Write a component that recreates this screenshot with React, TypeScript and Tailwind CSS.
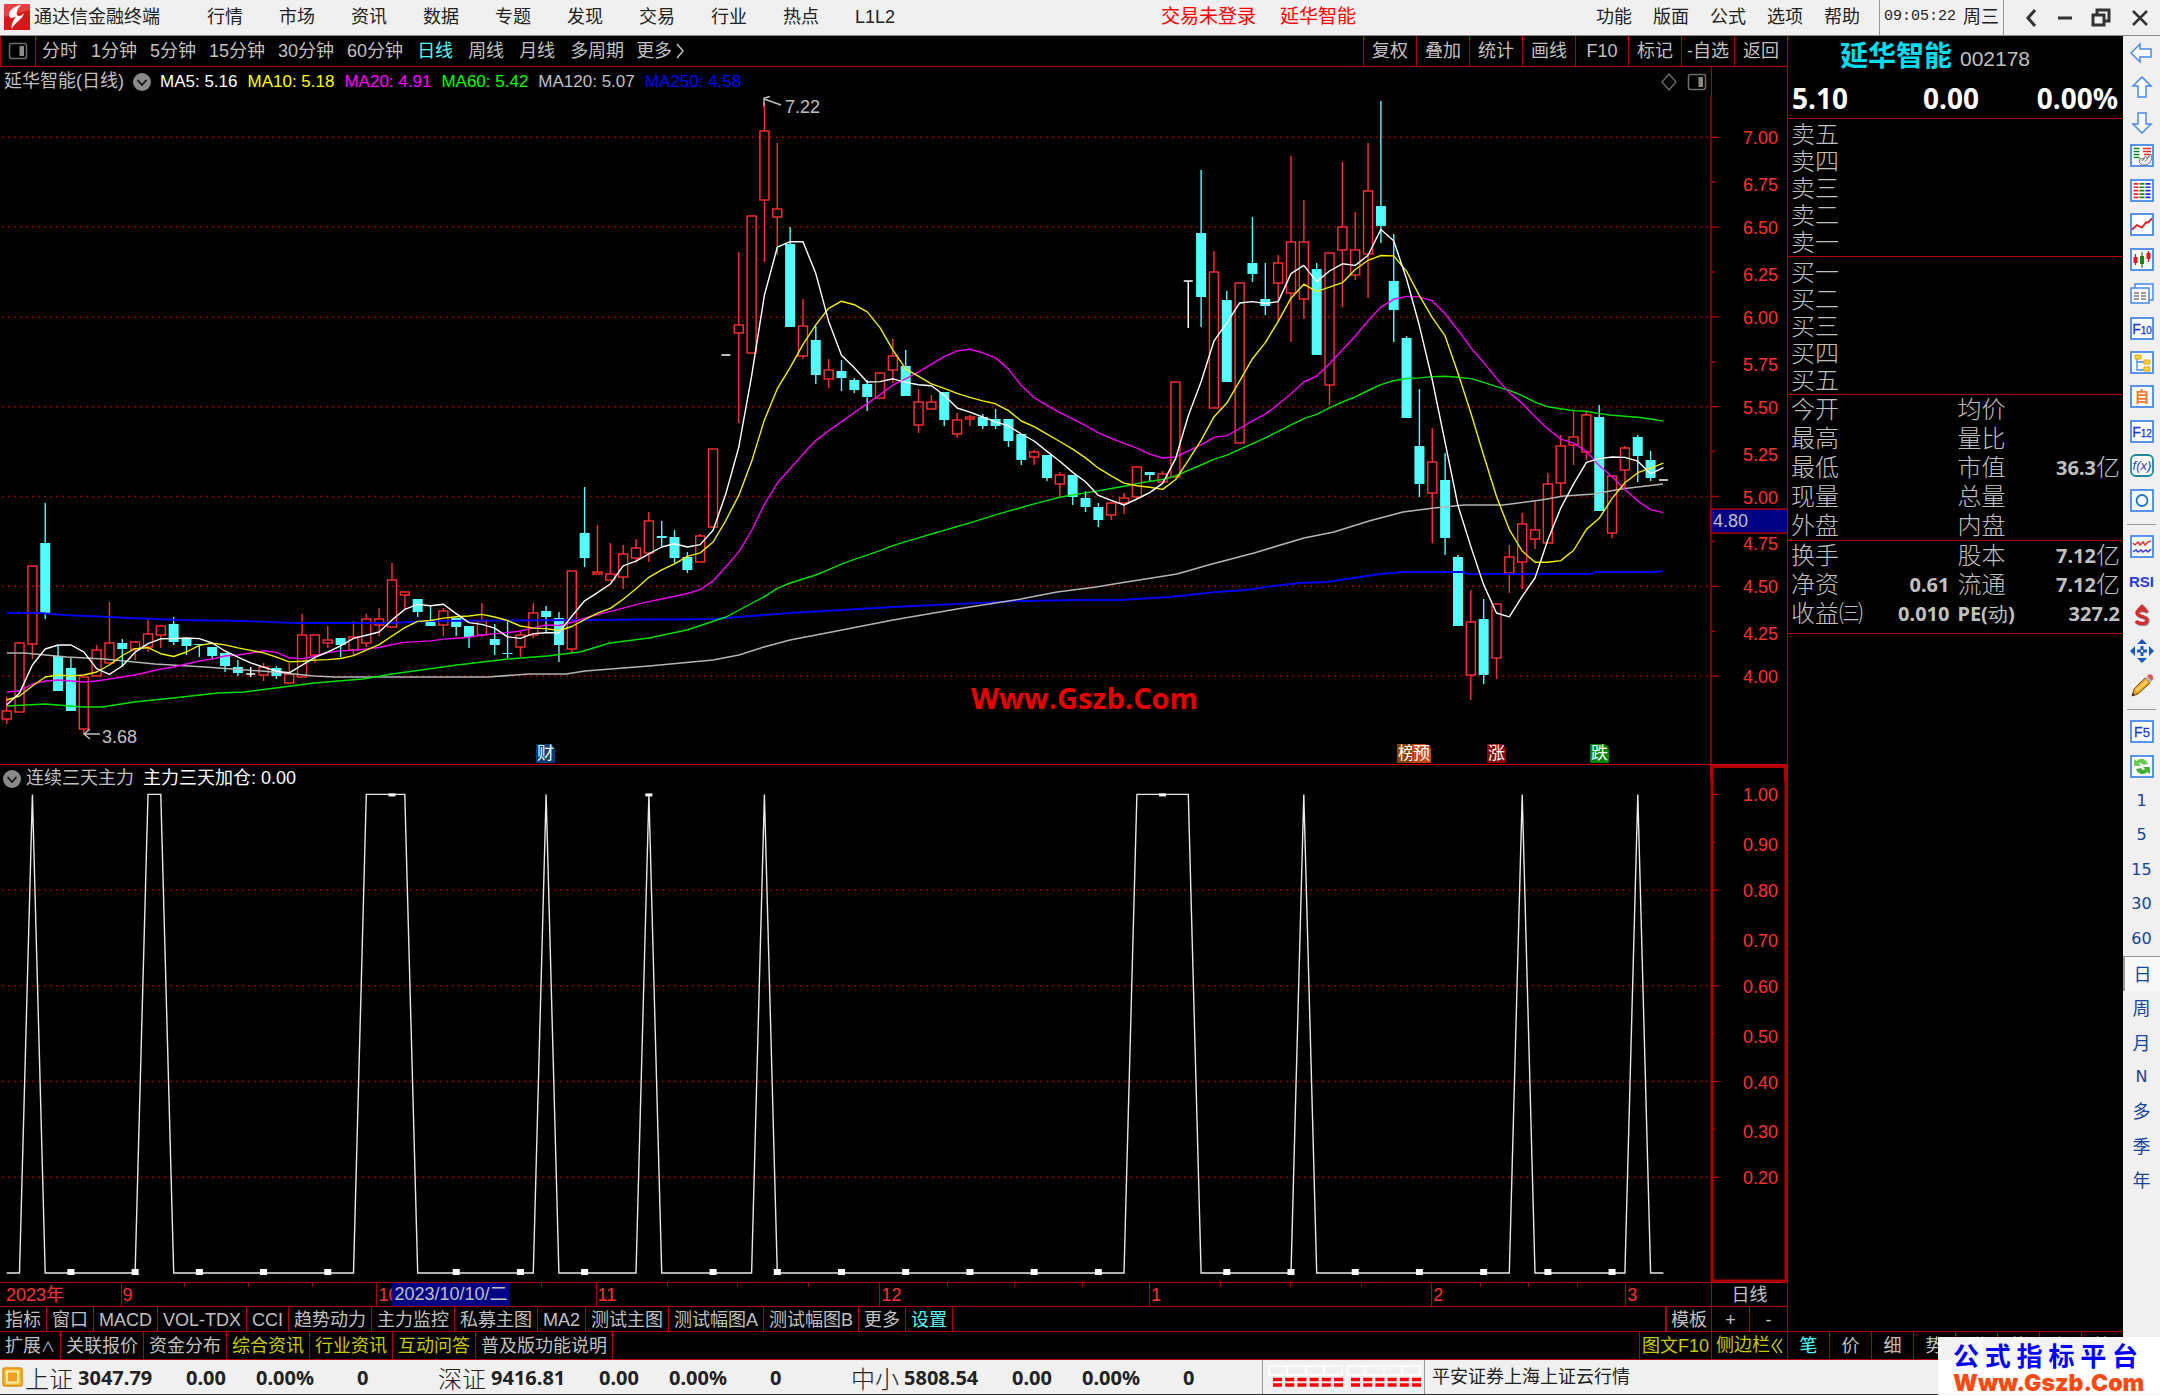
import type { ReactNode } from 'react'

type Kind = 'u' | 'd' | 'f'
// kind, body top, body bottom, high, low (chart units, y grows downwards)
type Candle = [Kind, number, number, number, number]

const CANDLES: Candle[] = [
  ['u', 711, 719, 697, 724], ['u', 643, 712, 643, 712], ['u', 566, 644, 566, 659], ['d', 543, 614, 503, 619], ['d', 656, 691, 646, 691],
  ['d', 668, 711, 658, 711], ['u', 677, 729, 677, 733], ['u', 650, 676, 645, 676], ['u', 643, 663, 602, 663], ['d', 643, 649, 639, 667],
  ['u', 642, 649, 641, 660], ['u', 634, 647, 619, 652], ['u', 626, 635, 626, 648], ['d', 624, 642, 617, 645], ['d', 639, 646, 639, 655],
  ['d', 644, 645, 644, 657], ['d', 647, 656, 647, 659], ['d', 653, 666, 653, 672], ['d', 667, 673, 660, 676], ['f', 674, 674, 667, 677],
  ['u', 667, 675, 663, 681], ['d', 668, 676, 666, 679], ['u', 674, 683, 663, 683], ['u', 635, 677, 614, 677], ['u', 635, 655, 635, 663],
  ['u', 640, 643, 626, 648], ['d', 638, 645, 638, 657], ['u', 637, 650, 621, 656], ['u', 619, 643, 614, 647], ['u', 619, 625, 608, 636],
  ['u', 580, 627, 563, 628], ['u', 592, 595, 592, 610], ['d', 599, 612, 599, 617], ['d', 620, 626, 605, 626], ['u', 611, 625, 608, 636],
  ['d', 618, 627, 618, 636], ['d', 626, 637, 626, 648], ['u', 621, 635, 603, 637], ['d', 639, 645, 624, 655], ['d', 653, 654, 621, 658],
  ['u', 635, 647, 632, 657], ['u', 613, 635, 603, 638], ['d', 611, 617, 606, 633], ['d', 618, 645, 612, 662], ['u', 571, 649, 571, 653],
  ['d', 533, 558, 487, 567], ['u', 572, 574, 525, 574], ['u', 574, 580, 543, 580], ['u', 554, 577, 545, 589], ['u', 548, 558, 539, 563],
  ['u', 521, 553, 512, 562], ['d', 536, 538, 521, 546], ['d', 537, 558, 530, 564], ['d', 557, 570, 552, 573], ['u', 536, 562, 534, 562],
  ['u', 449, 527, 449, 527], ['f', 355, 355, 355, 355], ['u', 325, 333, 252, 423], ['u', 216, 353, 216, 353], ['u', 131, 200, 102, 262],
  ['u', 209, 217, 143, 255], ['d', 244, 327, 227, 327], ['u', 326, 356, 299, 359], ['d', 340, 375, 326, 384], ['u', 370, 379, 359, 388],
  ['d', 371, 378, 360, 391], ['d', 380, 390, 378, 393], ['d', 384, 397, 380, 411], ['u', 373, 398, 373, 398], ['u', 356, 370, 339, 383],
  ['d', 366, 396, 350, 396], ['u', 402, 425, 389, 433], ['u', 402, 409, 395, 409], ['d', 392, 420, 392, 426], ['u', 420, 434, 413, 438],
  ['u', 417, 419, 415, 426], ['d', 417, 426, 414, 429], ['d', 419, 426, 409, 429], ['d', 419, 441, 419, 447], ['d', 434, 460, 434, 465],
  ['u', 452, 457, 450, 465], ['d', 455, 478, 455, 481], ['u', 475, 484, 472, 497], ['d', 475, 497, 475, 505], ['d', 498, 507, 491, 512],
  ['d', 507, 520, 503, 527], ['u', 503, 515, 502, 520], ['u', 498, 503, 493, 514], ['u', 467, 497, 467, 499], ['d', 472, 475, 472, 482],
  ['u', 474, 482, 471, 482], ['u', 382, 477, 382, 477], ['f', 281, 281, 281, 328], ['d', 233, 297, 170, 327], ['u', 272, 408, 251, 408],
  ['d', 300, 382, 291, 382], ['u', 283, 443, 283, 443], ['d', 263, 274, 217, 282], ['d', 299, 306, 263, 315], ['u', 263, 283, 255, 321],
  ['u', 242, 293, 156, 342], ['u', 242, 299, 200, 319], ['d', 269, 355, 263, 355], ['u', 253, 385, 253, 405], ['u', 227, 250, 162, 307],
  ['u', 250, 275, 212, 280], ['u', 191, 254, 143, 298], ['d', 206, 226, 101, 243], ['d', 281, 310, 234, 342], ['d', 338, 418, 336, 418],
  ['d', 446, 484, 389, 497], ['u', 462, 493, 428, 543], ['d', 480, 538, 453, 555], ['d', 557, 626, 555, 626], ['u', 622, 675, 590, 700],
  ['d', 619, 675, 599, 684], ['u', 604, 658, 604, 679], ['u', 557, 573, 545, 593], ['u', 524, 562, 513, 589], ['u', 530, 539, 501, 549],
  ['u', 484, 543, 473, 543], ['u', 446, 483, 435, 497], ['u', 437, 445, 410, 465], ['u', 415, 452, 412, 460], ['d', 417, 511, 405, 511],
  ['u', 476, 533, 476, 538], ['u', 448, 470, 446, 488], ['d', 437, 456, 435, 482], ['d', 460, 478, 451, 481], ['f', 480, 480, 480, 480],
]

const xOf = (i: number) => 6.7 + i * 12.843
const CLOSES = CANDLES.map(c => (c[0] === 'd' ? c[2] : c[1]))

// seed covers the bars that have no full window on screen
function movingAverage(n: number, seed: number[]) {
  return CLOSES.map((_, i) => {
    const y = i < n - 1 ? seed[i] : CLOSES.slice(i - n + 1, i + 1).reduce((a, b) => a + b, 0) / n
    return y === undefined ? null : `${xOf(i).toFixed(1)},${y.toFixed(1)}`
  }).filter(Boolean).join(' ')
}

const MA5 = movingAverage(5, [705, 693, 665, 649])
const MA10 = movingAverage(10, [700, 696, 686, 677, 675, 676, 675, 672, 665])
const MA20 = movingAverage(20, [692, 691, 684, 681, 680, 681, 682, 681, 679, 677, 675, 672, 669, 667, 664, 661, 659, 656, 655])
const MA60 =
  '7,706 45,704 83,707 102,707 134,702 173,698 218,693 244,692 314,683 363,679 392,674 457,665 508,659 547,656 580,652 610,643 649,638 687,630 726,617 ' +
  movingAverage(60, [])
const MA120 =
  '7,653 24,653 67,657 104,659 155,664 205,667 274,672 314,676 335,677 488,677 529,674 566,674 585,671 649,666 713,660 739,655 764,647 790,640 842,630 893,620 957,609 1021,599 1057,592 1096,587 1120,583 1177,574 1212,564 1254,553 1304,538 1334,532 1369,521 1403,512 1434,508 1464,505 1503,505 1541,500 1564,496 1594,494 1621,489 1663,484'
const MA250 =
  '7,613 39,613 65,615 130,618 178,620 244,621 296,623 392,623 429,621 580,620 713,619 790,613 893,607 1021,601 1080,600 1120,600 1170,597 1216,592 1246,590 1273,586 1300,583 1327,582 1380,574 1403,572 1464,572 1467,574 1592,574 1595,572 1655,572 1663,571'

const LEGEND = [
  { label: 'MA5: 5.16', cls: 'text-white' },
  { label: 'MA10: 5.18', cls: 'text-[#ffff00]' },
  { label: 'MA20: 4.91', cls: 'text-[#ff00ff]' },
  { label: 'MA60: 5.42', cls: 'text-[#00ff00]' },
  { label: 'MA120: 5.07', cls: 'text-[#c0c0c0]' },
  { label: 'MA250: 4.58', cls: 'text-[#0000ff]' },
]

const MENU = ['行情', '市场', '资讯', '数据', '专题', '发现', '交易', '行业', '热点', 'L1L2']
const MENU_RIGHT = ['功能', '版面', '公式', '选项', '帮助']
const MINUTES = ['分时', '1分钟', '5分钟', '15分钟', '30分钟', '60分钟']
const PERIODS = ['日线', '周线', '月线', '多周期']
const TOOLS = ['复权', '叠加', '统计', '画线', 'F10', '标记', '-自选', '返回']
const INDICATORS = ['指标', '窗口', 'MACD', 'VOL-TDX', 'CCI', '趋势动力', '主力监控', '私募主图', 'MA2', '测试主图', '测试幅图A', '测试幅图B', '更多', '设置']
const EXTRAS = ['关联报价', '资金分布', '综合资讯', '行业资讯', '互动问答', '普及版功能说明']
const SIDE_TABS = ['笔', '价', '细', '势', '联', '值', '主', '筹']

const MONTHS = [
  { label: '2023年', span: 121, ticks: false },
  { label: '9', span: 256, ticks: true },
  { label: '10', span: 219, ticks: true },
  { label: '11', span: 284, ticks: true },
  { label: '12', span: 270, ticks: true },
  { label: '1', span: 282, ticks: true },
  { label: '2', span: 194, ticks: true },
  { label: '3', span: 85, ticks: false },
]

const STATS = [
  ['今开', '', '均价', ''],
  ['最高', '', '量比', ''],
  ['最低', '', '市值', '36.3亿'],
  ['现量', '', '总量', ''],
  ['外盘', '', '内盘', ''],
]
const FUNDAMENTALS = [
  ['换手', '', '股本', '7.12亿'],
  ['净资', '0.61', '流通', '7.12亿'],
  ['收益㈢', '0.010', 'PE(动)', '327.2'],
]

const INDEXES = [
  { name: '上证', value: '3047.79' },
  { name: '深证', value: '9416.81' },
  { name: '中小', value: '5808.54' },
]

function CandleShape({ c, i }: { c: Candle; i: number }) {
  const [kind, top, bottom, high, low] = c
  const x = xOf(i)
  if (kind === 'f') {
    return (
      <g stroke="#fff" strokeWidth={1.5}>
        <line x1={x - 4.5} x2={x + 4.5} y1={top} y2={top} />
        {high !== low && <line x1={x} x2={x} y1={high} y2={low} />}
      </g>
    )
  }
  const color = kind === 'u' ? '#ff3232' : '#54fcfc'
  return (
    <g stroke={color} strokeWidth={1.4}>
      {high < top && <line x1={x} x2={x} y1={high} y2={top} />}
      {low > bottom && <line x1={x} x2={x} y1={bottom} y2={low} />}
      {kind === 'u' ? (
        <rect x={x - 4.5} y={top} width={9} height={bottom - top} fill="none" />
      ) : (
        <rect x={x - 5} y={top} width={10} height={bottom - top} fill={color} stroke="none" />
      )}
    </g>
  )
}

function GridLine({ y }: { y: number }) {
  return <line x1={2} x2={1709} y1={y} y2={y} stroke="#a80000" strokeWidth={1.5} strokeDasharray="1.7 4.3" />
}

function PriceChart() {
  const labels = Array.from({ length: 13 }, (_, i) => 7 - i * 0.25)
  const yOf = (p: number) => 137.3 + (7 - p) * 179.6
  return (
    <svg viewBox="0 96 1787 668" className="block w-full" fontSize={18}>
      {labels.map((p, i) => {
        const y = yOf(p)
        return (
          <g key={p}>
            {i % 2 === 0 && <GridLine y={y} />}
            <line x1={1711} x2={i % 2 === 0 ? 1719 : 1715} y1={y} y2={y} stroke="#b00000" strokeWidth={1.4} />
            <text x={1778} y={y + (i % 2 === 0 ? 7 : 9)} textAnchor="end" fill="#ff3232">{p.toFixed(2)}</text>
          </g>
        )
      })}
      {CANDLES.map((c, i) => <CandleShape key={i} c={c} i={i} />)}
      <g fill="none" strokeWidth={1.4} strokeLinejoin="round">
        <polyline points={MA250} stroke="#0000f0" strokeWidth={1.8} />
        <polyline points={MA120} stroke="#b4b4b4" strokeWidth={1.6} />
        <polyline points={MA60} stroke="#00e000" />
        <polyline points={MA20} stroke="#f000f0" />
        <polyline points={MA10} stroke="#f0f000" />
        <polyline points={MA5} stroke="#fff" />
      </g>
      <g fill="none" stroke="#c0c0c0" strokeWidth={1.4}>
        <path d="M764 99l17 6M764 106v-8l6-1.500" />
        <path d="M84 734h16M90 729l-6 5l6 5" />
      </g>
      <g fill="#c0c0c0">
        <text x={785} y={113}>7.22</text>
        <text x={102} y={743}>3.68</text>
      </g>
      <line x1={1711} x2={1711} y1={96} y2={764} stroke="#b00000" strokeWidth={1.4} />
      <rect x={1711} y={509} width={78} height={24} fill="#000084" stroke="#b00000" strokeWidth={1.4} />
      <text x={1713} y={527} fill="#c0c0c0">4.80</text>
      <text x={971} y={709} fill="#e60000" fontSize={29} fontWeight={700} fontFamily="Open Sans, Noto Sans, sans-serif">Www.Gszb.Com</text>
    </svg>
  )
}

// bars where the signal is on
const SIGNAL = new Set([2, 11, 12, 28, 29, 30, 31, 42, 50, 59, 88, 89, 90, 91, 92, 101, 118, 127])

function SignalChart() {
  const yOf = (v: number) => 1273 - v * 478.6
  const points = CANDLES.map((_, i) => `${xOf(i).toFixed(1)},${yOf(SIGNAL.has(i) ? 1 : 0).toFixed(1)}`).join(' ')
  return (
    <svg viewBox="0 781 1787 501" className="block w-full" fontSize={18}>
      {Array.from({ length: 9 }, (_, i) => 1 - i * 0.1).map((v, i) => {
        const y = yOf(v)
        return (
          <g key={i}>
            {i % 2 === 0 && i > 0 && <GridLine y={y} />}
            <line x1={1711} x2={i % 2 === 0 ? 1719 : 1715} y1={y} y2={y} stroke="#b00000" strokeWidth={1.4} />
            <text x={1778} y={y + (i % 2 === 0 ? 7 : 9)} textAnchor="end" fill="#ff3232">{v.toFixed(2)}</text>
          </g>
        )
      })}
      <polyline points={points} fill="none" stroke="#e8e8e8" strokeWidth={1.4} />
      {Array.from({ length: 25 }, (_, i) => (i + 1) * 5).map(i => {
        const on = SIGNAL.has(i)
        return <rect key={i} x={xOf(i) - 3.5} y={on ? yOf(1) - 1 : yOf(0) - 4} width={7} height={on ? 3 : 6} fill="#fff" />
      })}
      <path d="M1712 781v500h75" fill="none" stroke="#b00000" strokeWidth={3} />
      <path d="M1786 781v501" stroke="#b00000" strokeWidth={3} />
    </svg>
  )
}

function PanelIcon() {
  return (
    <svg width="20" height="18" viewBox="0 0 20 18" fill="none">
      <rect x="1.500" y="1.500" width="17" height="15" rx="2" stroke="#6e6e6e" strokeWidth="1.500" />
      <rect x="11.500" y="4" width="4.500" height="10" fill="#8c8c8c" />
    </svg>
  )
}

function ToggleIcon() {
  return (
    <svg width="20" height="20" viewBox="0 0 20 20">
      <circle cx="10" cy="10" r="9" fill="#8a8a8a" />
      <path d="M5.500 8l4.500 5l4.500-5" fill="none" stroke="#111" strokeWidth="1.800" />
    </svg>
  )
}

function Boxed({ children, round }: { children: ReactNode; round?: boolean }) {
  return (
    <svg width="24" height="24" viewBox="0 0 24 24" fill="none">
      <rect x="1" y="1" width="22" height="21" rx={round ? 5 : 0} fill="#fff" stroke={round ? '#1c8a96' : '#4688ee'} strokeWidth="1.800" />
      {children}
    </svg>
  )
}

function FKey({ n }: { n: string }) {
  return (
    <text x="12" y="17" textAnchor="middle" fontSize={14} fill="#1e3ccc" stroke="#1e3ccc" strokeWidth="0.300">
      F<tspan fontSize={n.length > 1 ? 10 : 13}>{n}</tspan>
    </text>
  )
}

const ARROW = 'M1 12l9-9v5h11v8h-11v5z'
const NAV_ICONS: { name: string; icon: ReactNode }[] = [
  { name: '后退', icon: <svg width="24" height="24" viewBox="0 0 24 24"><path d={ARROW} fill="#fff" stroke="#4688ee" strokeWidth="1.500" /></svg> },
  { name: '上翻', icon: <svg width="24" height="24" viewBox="0 0 24 24"><path d={ARROW} transform="rotate(90 12 12)" fill="#fff" stroke="#4688ee" strokeWidth="1.500" /></svg> },
  { name: '下翻', icon: <svg width="24" height="24" viewBox="0 0 24 24"><path d={ARROW} transform="rotate(-90 12 12)" fill="#fff" stroke="#4688ee" strokeWidth="1.500" /></svg> },
  {
    name: '报价', icon: (
      <Boxed>
        <path d="M3.500 4.500h6M3.500 7.500h6M3.500 10.500h6M3.500 13.500h6" stroke="#118811" strokeWidth="1.700" />
        <path d="M13 4.500h8M13 7.500h8M14 10.500h7" stroke="#f22" strokeWidth="1.700" />
        <path d="M10 14.500l3 .5l2.500-3l1.500 2l4-4l1 4l-2 5l-4 2h-4l-3-3z" fill="#eee" stroke="#777" />
        <path d="M12 17l3-3M15 17.500l4-5" stroke="#777" />
      </Boxed>
    ),
  },
  {
    name: '行情', icon: (
      <Boxed>
        <g strokeWidth="5" strokeDasharray="1.700 1.700">
          <path d="M6 4v16" stroke="#f22" />
          <path d="M12 4v16" stroke="#118811" />
          <path d="M18 4v16" stroke="#22f" />
        </g>
      </Boxed>
    ),
  },
  { name: '走势', icon: <Boxed><path d="M2 16.500l5-4.500l2.500 1.500l2.500 1l4-5h2l4-4" stroke="#e11" strokeWidth="1.800" /></Boxed> },
  {
    name: 'K线', icon: (
      <Boxed>
        <path d="M5.500 6v11M18.500 3v11" stroke="#e11" strokeWidth="1.200" />
        <path d="M12 4v16" stroke="#118811" strokeWidth="1.200" />
        <path d="M3.500 9h4v6h-4zM16.500 5h4v6h-4z" fill="#e11" />
        <path d="M10 8h4v8h-4z" fill="#118811" />
      </Boxed>
    ),
  },
  {
    name: '资料', icon: (
      <svg width="24" height="24" viewBox="0 0 24 24" fill="#fff" stroke="#4688ee" strokeWidth="1.500">
        <path d="M5 2h18v16H5z" />
        <path d="M1 6h18v15H1z" />
        <path d="M4 11h5M4 14h5M4 17h5M11 11h5M11 14h5M11 17h5" stroke="#777" />
      </svg>
    ),
  },
  { name: 'F10', icon: <Boxed><FKey n="10" /></Boxed> },
  {
    name: '板块', icon: (
      <Boxed>
        <path d="M7 8v11h7M7 11h7" stroke="#4688ee" strokeWidth="1.300" />
        <g fill="#ffd540" stroke="#e8a000"><path d="M5 4h6v4H5zM14 9h6v4h-6zM14 16h6v4h-6z" /></g>
      </Boxed>
    ),
  },
  { name: '自选', icon: <Boxed><text x="12" y="17" textAnchor="middle" fontSize="15" fontWeight="700" fill="#ff7a30">自</text></Boxed> },
  { name: 'F12', icon: <Boxed><FKey n="12" /></Boxed> },
  { name: '公式', icon: <Boxed round><text x="12" y="16" textAnchor="middle" fontSize="13" fontStyle="italic" fill="#1e3ccc">f(x)</text></Boxed> },
  { name: '圆', icon: <Boxed><circle cx="12" cy="11.500" r="5.500" stroke="#1a74d0" strokeWidth="1.800" /></Boxed> },
]

const DRAW_ICONS: { name: string; icon: ReactNode }[] = [
  {
    name: '多线', icon: (
      <Boxed>
        <path d="M3 8l2 2l3-3l2 3l3-3l2 3l3-3l3-1" stroke="#e33" strokeWidth="1.500" />
        <path d="M3 17l3-2l2 2l3-2l2 2l3-2l2 2l3-3" stroke="#33e" strokeWidth="1.500" />
      </Boxed>
    ),
  },
  { name: 'RSI', icon: <span className="text-[15px] font-bold text-[#2b3bd8]">RSI</span> },
  {
    name: '资金', icon: (
      <svg width="24" height="24" viewBox="0 0 24 24" fill="none">
        <path d="M18 9c-2-3-10-3-10 1c0 4 10 3 10 7c0 5-9 4-11 1" stroke="#999" strokeWidth="3.500" />
        <path d="M17 8c-2-3-10-3-10 1c0 4 10 3 10 7c0 5-9 4-11 1" stroke="#d03030" strokeWidth="3.500" />
        <path d="M7 5l5-5l5 5z" fill="#d03030" />
      </svg>
    ),
  },
  {
    name: '移动', icon: (
      <svg width="24" height="24" viewBox="0 0 24 24" fill="#1458c0">
        <path d="M12 0l5 5H7zM12 24l5-5H7zM0 12l5-5v10zM24 12l-5-5v10z" />
        <path d="M10.500 7h3v3.500H17v3h-3.500V17h-3v-3.500H7v-3h3.500z" />
        <circle cx="12" cy="12" r="1.200" fill="#fff" />
      </svg>
    ),
  },
  {
    name: '画笔', icon: (
      <svg width="24" height="24" viewBox="0 0 24 24">
        <path d="M2 22l2-7L15 4l5 5L8 20z" fill="#f0a020" stroke="#7a5010" />
        <path d="M5 16l11-10l2 2L7 18z" fill="#ffd060" />
        <path d="M15 4l2-2l5 5l-2 2z" fill="#bbb" />
        <path d="M17 2l2-1.500c2-1 5 2 4 4l-1 2.500z" fill="#e05050" />
        <path d="M2 22l1-3l2 2z" fill="#222" />
      </svg>
    ),
  },
]

const CYCLE_ICONS: { name: string; icon: ReactNode }[] = [
  { name: 'F5', icon: <Boxed><FKey n="5" /></Boxed> },
  {
    name: '刷新', icon: (
      <Boxed>
        <path d="M4 11V4l2.500 2c4-4 10-2 11.500 3l-5 1c-1-2-2-2.500-4-1l2 2z" fill="#68cc50" />
        <path d="M20 12v7l-2.500-2c-4 4-10 2-11.500-3l5-1c1 2 2 2.500 4 1l-2-2z" fill="#48ac38" />
      </Boxed>
    ),
  },
]
const CYCLES = ['1', '5', '15', '30', '60', '日', '周', '月', 'N', '多', '季', '年']

function TitleBar() {
  return (
    <header className="flex h-9 items-center border-b border-[#888] bg-[#f0f0f0] text-[18px] text-[#222]">
      <svg width="26" height="27" viewBox="0 0 26 27" className="mx-1 shrink-0">
        <rect width="26" height="26" rx="1" fill="#e84040" />
        <path d="M0 13L26 6v20H0z" fill="#d81818" />
        <path d="M17 1c-7 1-13 6-12 11c1 3 5 2 7 0c-4 6-5 10-4 13c1-6 11-9 12-16c-2 3-6 4-7 2c-1-3 1-7 4-10z" fill="#fff" />
      </svg>
      <span className="w-[173px] shrink-0">通达信金融终端</span>
      <nav className="flex gap-9">
        {MENU.map(m => <button key={m}>{m}</button>)}
      </nav>
      <div className="ml-[266px] flex gap-6 text-[19px] text-[#ff0000]">
        <button>交易未登录</button>
        <button>延华智能</button>
      </div>
      <nav className="ml-auto flex gap-[21px] pr-[19px]">
        {MENU_RIGHT.map(m => <button key={m}>{m}</button>)}
      </nav>
      <div className="flex h-full w-[125px] items-center justify-between border-x border-[#999] px-1">
        <time className="font-['Liberation_Mono'] text-[15px]">09:05:22</time>
        <span>周三</span>
      </div>
      <div className="flex w-[156px] items-center justify-between pl-[20px] pr-[11px]">
        <button aria-label="收起"><svg width="14" height="20" viewBox="0 0 14 20"><path d="M11 2L4 10l7 8" fill="none" stroke="#333" strokeWidth="3" /></svg></button>
        <button aria-label="最小化"><svg width="14" height="20" viewBox="0 0 14 20"><path d="M0 10h14" stroke="#333" strokeWidth="3" /></svg></button>
        <button aria-label="还原"><svg width="20" height="20" viewBox="0 0 20 20"><path d="M6 6V2h12v11h-4M2 7h11v10H2z" fill="none" stroke="#333" strokeWidth="3" /></svg></button>
        <button aria-label="关闭"><svg width="18" height="20" viewBox="0 0 18 20"><path d="M2 3l14 14M16 3L2 17" stroke="#333" strokeWidth="2.500" /></svg></button>
      </div>
    </header>
  )
}

function PeriodBar() {
  return (
    <div className="flex h-[31px] items-stretch border-b border-l border-[#b00000]">
      <button aria-label="布局" className="flex w-[35px] items-center justify-center border-r border-[#b00000]"><PanelIcon /></button>
      <div className="flex items-center gap-[13px] pl-[6px]">
        {MINUTES.map(p => <button key={p}>{p}</button>)}
      </div>
      <div className="flex items-center gap-[15px] pl-[14px]">
        {PERIODS.map(p => (
          <button key={p} className={p === '日线' ? 'text-[#54fcfc]' : ''}>{p}</button>
        ))}
        <button className="-ml-[3px] flex items-center gap-1">
          更多
          <svg width="10" height="18" viewBox="0 0 10 18"><path d="M1 2l6 7l-6 7" fill="none" stroke="#c0c0c0" strokeWidth="1.500" /></svg>
        </button>
      </div>
      <div className="ml-auto flex">
        {TOOLS.map(t => (
          <button key={t} className="w-[53px] border-l border-[#b00000] text-center whitespace-nowrap">{t}</button>
        ))}
      </div>
    </div>
  )
}

function Badge({ text, cls }: { text: string; cls: string }) {
  return <span className={`absolute bottom-px h-[19px] rounded-tr-md px-px text-[17px] leading-[19px] text-white ${cls}`}>{text}</span>
}

function TimeAxis() {
  return (
    <div className="relative flex h-[24px] border-t border-[#b00000] leading-[24px] text-[#ff3232]">
      <div className="flex flex-1">
        {MONTHS.map((m, i) => (
          <div key={m.label} className={`relative ${i ? 'border-l border-[#b00000]' : ''}`} style={{ flex: `${m.span} 1 0%` }}>
            {m.ticks && (
              <div className="absolute inset-x-0 top-0 flex h-1 justify-evenly">
                <i className="border-l border-[#b00000]" />
                <i className="border-l border-[#b00000]" />
                <i className="border-l border-[#b00000]" />
              </div>
            )}
            <span className={i ? 'pl-px' : 'pl-[6px]'}>{m.label}</span>
          </div>
        ))}
      </div>
      <span className="absolute left-[392px] top-0 w-[118px] bg-[#000084] text-center leading-[23px] text-[#c0c0c0]">2023/10/10/二</span>
      <div className="w-[76px] border-l border-[#b00000] text-center text-[#c0c0c0]">日线</div>
    </div>
  )
}

function BottomTabs() {
  return (
    <>
      <div className="flex h-[25px] items-stretch border-t border-[#b00000] leading-[26px]">
        {INDICATORS.map(t => (
          <button key={t} className={`border-r border-[#b00000] px-[5px] whitespace-nowrap ${t === '设置' ? 'text-[#54fcfc]' : ''}`}>{t}</button>
        ))}
        <button className="ml-auto w-[46px] border-l-2 border-[#b00000]">模板</button>
        <button className="w-[38px] border-l border-[#b00000]">+</button>
        <button className="w-[38px] border-l border-[#b00000]">-</button>
      </div>
      <div className="flex h-[29px] items-stretch border-y border-[#b00000] leading-[29px]">
        <button className="border-r border-[#b00000] px-[5px] whitespace-nowrap">扩展<span className="text-[14px]">∧</span></button>
        {EXTRAS.map((t, i) => (
          <button key={t} className={`border-r border-[#b00000] px-[5px] whitespace-nowrap ${i > 1 && i < 5 ? 'text-[#c8c800]' : ''}`}>{t}</button>
        ))}
        <button className="ml-auto w-[72px] border-l border-[#b00000] whitespace-nowrap text-[#c8c800]">图文F10</button>
        <button className="flex w-[76px] items-center justify-center gap-px border-l border-[#b00000] whitespace-nowrap text-[#c8c800]">
          侧边栏
          <svg width="12" height="16" viewBox="0 0 12 16"><path d="M6 1L1 8l5 7M11 1L6 8l5 7" fill="none" stroke="#c8c800" strokeWidth="1.300" /></svg>
        </button>
      </div>
    </>
  )
}

function StatTable({ rows }: { rows: string[][] }) {
  return (
    <table className="w-full table-fixed">
      <tbody>
        {rows.map(r => (
          <tr key={r[0]} className="h-[29px] leading-[24px]">
            <td className="w-[76px] p-0 pl-[3px] text-[24px] font-light whitespace-nowrap">{r[0]}</td>
            <td className="p-0 pr-1 text-right font-['Noto_Sans'] text-[20px] font-bold">{r[1]}</td>
            {r[2].startsWith('PE') ? (
              <td className="w-[80px] p-0 pl-1 font-['Noto_Sans'] text-[20px] font-bold whitespace-nowrap">PE(<span className="font-light">动</span>)</td>
            ) : (
              <td className="w-[80px] p-0 pl-1 text-[24px] font-light whitespace-nowrap">{r[2]}</td>
            )}
            <td className="p-0 pr-[3px]">
              <div className="flex items-center justify-end">
                <span className="font-['Noto_Sans'] text-[20px] font-bold">{r[3].replace('亿', '')}</span>
                {r[3].endsWith('亿') && <span className="text-[24px] font-light">亿</span>}
              </div>
            </td>
          </tr>
        ))}
      </tbody>
    </table>
  )
}

function QuotePanel() {
  return (
    <aside className="flex w-[336px] shrink-0 flex-col border-l border-[#b00000]">
      <div className="h-[83px] border-b border-[#b00000]">
        <div className="flex items-baseline justify-center gap-2 pr-[41px] leading-[42px]">
          <h1 className="text-[28px] font-bold text-[#00dcf0]">延华智能</h1>
          <span className="text-[21px]">002178</span>
        </div>
        <div className="flex justify-between pl-1 pr-[5px] font-['Noto_Sans'] text-[28px] leading-9 font-bold text-white">
          <span className="w-[125px]">5.10</span>
          <span>0.00</span>
          <span className="w-[133px] text-right">0.00%</span>
        </div>
      </div>
      <ul className="h-[138px] border-b border-[#b00000] pt-[2px] pl-[3px] text-[24px] leading-[27px] font-light">
        {['卖五', '卖四', '卖三', '卖二', '卖一'].map(s => <li key={s}>{s}</li>)}
      </ul>
      <ul className="h-[138px] border-b border-[#b00000] pt-[2px] pl-[3px] text-[24px] leading-[27px] font-light">
        {['买一', '买二', '买三', '买四', '买五'].map(s => <li key={s}>{s}</li>)}
      </ul>
      <div className="border-b border-[#b00000]"><StatTable rows={STATS} /></div>
      <div className="border-b border-[#b00000] pb-[5px]"><StatTable rows={FUNDAMENTALS} /></div>
      <div className="mt-auto flex h-[29px] border-y border-[#b00000] leading-[29px]">
        {SIDE_TABS.map((t, i) => (
          <button key={t} className={`flex-1 text-center ${i ? 'border-l border-[#b00000]' : 'text-[#54fcfc]'}`}>{t}</button>
        ))}
      </div>
    </aside>
  )
}

function IconBar() {
  const slot = 'flex w-full flex-1 items-center justify-center'
  return (
    <aside className="flex w-[37px] shrink-0 flex-col bg-[#f0f0f0] text-[#1a4494]">
      <div className="flex h-[482px] flex-col">
        {NAV_ICONS.map(n => <button key={n.name} aria-label={n.name} className={slot}>{n.icon}</button>)}
      </div>
      <div className="mx-1 flex h-3 items-center"><hr className="w-full border-[#999]" /></div>
      <div className="flex h-[173px] flex-col">
        {DRAW_ICONS.map(n => <button key={n.name} aria-label={n.name} className={slot}>{n.icon}</button>)}
      </div>
      <div className="mx-1 flex h-3 items-center"><hr className="w-full border-[#999]" /></div>
      <div className="flex h-[483px] flex-col">
        {CYCLE_ICONS.map(n => <button key={n.name} aria-label={n.name} className={slot}>{n.icon}</button>)}
        {CYCLES.map((c, i) => (
          <button key={c} className={`${slot} font-['DejaVu_Sans','Noto_Sans_CJK_SC'] ${i > 4 && c !== 'N' ? 'text-[18px]' : 'text-[16px]'} ${c === '日' ? 'border-t border-l-2 border-[#999] bg-[#f8f8f8]' : ''}`}>{c}</button>
        ))}
      </div>
    </aside>
  )
}

function StatusBar() {
  return (
    <footer className="flex h-[35px] items-center border-b border-[#203040] bg-[#f0f0f0] text-[#222]">
      <svg width="21" height="20" viewBox="0 0 21 20" className="mx-[2px] shrink-0">
        <rect x="1" y="1" width="19" height="18" rx="2" fill="#f8b830" stroke="#e08a10" strokeWidth="1.500" />
        <rect x="5" y="4.500" width="11" height="11" fill="#f0a020" stroke="#fff0b0" strokeWidth="2" />
      </svg>
      {INDEXES.map(x => (
        <div key={x.name} className="flex w-[413px] items-center pt-[2px] font-['Noto_Sans'] text-[20px] font-bold">
          <span className="w-[53px] font-['Noto_Sans_CJK_SC'] text-[24px] font-light">{x.name}</span>
          <span className="w-[108px]">{x.value}</span>
          <span className="w-[70px]">0.00</span>
          <span className="w-[101px]">0.00%</span>
          <span>0</span>
        </div>
      ))}
      <div className="-ml-[2px] flex h-full w-[163px] items-center justify-center border-x border-[#999]">
        <svg width="154" height="24" viewBox="0 0 154 24" fill="none">
          <path d="M2 1h73v9H2zM20 1v9M39 1v9M57 1v9M80 1h73v9H80zM98 1v9M117 1v9M135 1v9" stroke="#fff" strokeWidth="1.500" />
          <path d="M6 14.500h70M84 14.500h70M6 20h70M84 20h70" stroke="#f00" strokeWidth="3.500" strokeDasharray="9 3.200" />
        </svg>
      </div>
      <span className="pt-px pl-[7px] text-[18px]">平安证券上海上证云行情</span>
    </footer>
  )
}

export default function App() {
  return (
    <div className="relative flex min-h-screen flex-col bg-black font-['Liberation_Sans','Noto_Sans_CJK_SC',sans-serif] text-[18px] text-[#c0c0c0]">
      <TitleBar />
      <div className="flex flex-1">
        <main className="flex min-w-0 flex-1 flex-col">
          <PeriodBar />
          <div className="flex h-[29px] items-stretch">
            <div className="flex flex-1 items-center gap-2 pl-1 text-[17px]">
              <span className="text-[18px]">延华智能(日线)</span>
              <button aria-label="指标菜单"><ToggleIcon /></button>
              <div className="flex gap-[10px]">
                {LEGEND.map(l => <span key={l.label} className={l.cls}>{l.label}</span>)}
              </div>
              <div className="ml-auto flex items-center gap-[10px] pr-1">
                <svg width="16" height="18" viewBox="0 0 16 18"><path d="M8 1l7 8l-7 8l-7-8z" fill="none" stroke="#6e6e6e" strokeWidth="1.300" /></svg>
                <PanelIcon />
              </div>
            </div>
            <div className="w-[76px] border-l border-[#b00000]" />
          </div>
          <div className="relative border-b border-[#d00000]">
            <PriceChart />
            <Badge text="财" cls="left-[30%] bg-[#003c78]" />
            <Badge text="榜" cls="left-[1397px] bg-[#8a4200]" />
            <Badge text="预" cls="left-[1412px] bg-[#c04810]" />
            <Badge text="涨" cls="left-[1487px] bg-[#8c0000]" />
            <Badge text="跌" cls="left-[1590px] bg-[#008400]" />
          </div>
          <div className="flex h-4 items-stretch">
            <div className="flex flex-1 items-start gap-[9px] pl-[2px] leading-[27px]">
              <button aria-label="副图菜单" className="-mr-[5px] pt-[4px]"><ToggleIcon /></button>
              <span>连续三天主力</span>
              <span className="text-white">主力三天加仓: 0.00</span>
            </div>
            <div className="w-[77px] border-[3px] border-b-0 border-[#b00000]" />
          </div>
          <SignalChart />
          <TimeAxis />
          <BottomTabs />
        </main>
        <QuotePanel />
        <IconBar />
      </div>
      <StatusBar />
      <div className="absolute right-0 bottom-0 flex h-[58px] w-[222px] flex-col bg-white/95 pr-[22px] pl-[15px] leading-none">
        <div className="flex justify-between pt-[6px] text-[26px] leading-[28px] font-bold text-[#0000ff]">
          {[...'公式指标平台'].map(ch => <span key={ch}>{ch}</span>)}
        </div>
        <div className="font-['Inter'] text-[23px] leading-[24px] font-black text-[#ff4a14]">Www.Gszb.Com</div>
      </div>
    </div>
  )
}
